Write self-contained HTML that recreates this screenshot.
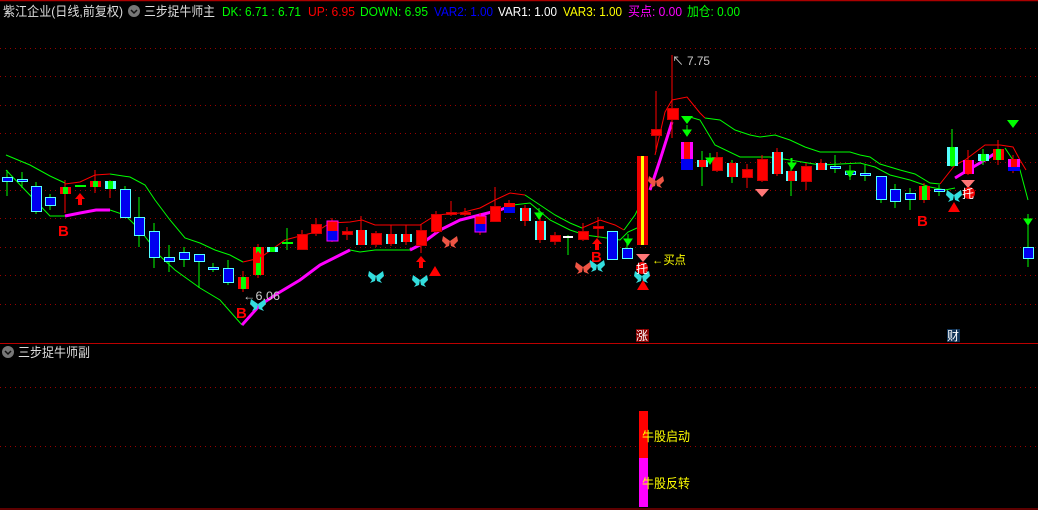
<!DOCTYPE html>
<html><head><meta charset="utf-8"><style>
html,body{margin:0;padding:0;background:#000;width:1038px;height:510px;overflow:hidden}
svg{display:block}
text{font-family:"Liberation Sans","Noto Sans CJK SC",sans-serif;font-size:13px}
</style></head><body>
<svg width="1038" height="510" viewBox="0 0 1038 510" xmlns="http://www.w3.org/2000/svg">
<rect width="1038" height="510" fill="#000"/>
<line x1="0" y1="0.5" x2="1038" y2="0.5" stroke="#a00" stroke-width="1.5"/>
<g stroke="#900" stroke-width="1" stroke-dasharray="1,4">
<line x1="0" y1="48.5" x2="1038" y2="48.5"/><line x1="0" y1="76.5" x2="1038" y2="76.5"/>
<line x1="0" y1="105.5" x2="1038" y2="105.5"/><line x1="0" y1="133.5" x2="1038" y2="133.5"/>
<line x1="0" y1="162.5" x2="1038" y2="162.5"/><line x1="0" y1="190.5" x2="1038" y2="190.5"/>
<line x1="0" y1="218.5" x2="1038" y2="218.5"/><line x1="0" y1="247.5" x2="1038" y2="247.5"/>
<line x1="0" y1="275.5" x2="1038" y2="275.5"/><line x1="0" y1="304.5" x2="1038" y2="304.5"/>
<line x1="0" y1="387.5" x2="1038" y2="387.5"/><line x1="0" y1="446.5" x2="1038" y2="446.5"/>
</g>
<line x1="0" y1="343.5" x2="1038" y2="343.5" stroke="#b00"/>
<line x1="0" y1="509" x2="1038" y2="509" stroke="#b00"/>

<!-- header -->
<text x="3" y="16" fill="#ddd" textLength="120" lengthAdjust="spacingAndGlyphs">紫江企业(日线,前复权)</text>
<circle cx="134" cy="11" r="6" fill="#777"/><path d="M131 10l3 3 3-3" stroke="#111" stroke-width="1.5" fill="none"/>
<text x="144" y="16" fill="#ddd" textLength="71" lengthAdjust="spacingAndGlyphs">三步捉牛师主</text>
<text x="222" y="16" fill="#0f0" textLength="79" lengthAdjust="spacingAndGlyphs">DK: 6.71 : 6.71</text>
<text x="308" y="16" fill="#f00" textLength="47" lengthAdjust="spacingAndGlyphs">UP: 6.95</text>
<text x="360" y="16" fill="#0f0" textLength="68" lengthAdjust="spacingAndGlyphs">DOWN: 6.95</text>
<text x="434" y="16" fill="#00f" textLength="59" lengthAdjust="spacingAndGlyphs">VAR2: 1.00</text>
<text x="498" y="16" fill="#fff" textLength="59" lengthAdjust="spacingAndGlyphs">VAR1: 1.00</text>
<text x="563" y="16" fill="#ff0" textLength="59" lengthAdjust="spacingAndGlyphs">VAR3: 1.00</text>
<text x="628" y="16" fill="#f0f" textLength="54" lengthAdjust="spacingAndGlyphs">买点: 0.00</text>
<text x="687" y="16" fill="#0f0" textLength="53" lengthAdjust="spacingAndGlyphs">加仓: 0.00</text>

<!-- band lines -->
<g fill="none" stroke-width="1">
<polyline stroke="#0f0" points="6,155 30,165 50,176 65,183"/>
<polyline stroke="#f00" points="65,184 80,182 95,175 110,174"/>
<polyline stroke="#0f0" points="110,174 130,177 145,185 155,200 170,220 185,238 200,243 215,250 230,255 243,262"/>
<polyline stroke="#f00" points="243,262 260,258 285,240 300,236 316,232 330,223 350,222 362,220 375,225 405,225 420,225 436,215 460,213 480,208 495,200 510,193 525,195"/>
<polyline stroke="#0f0" points="525,195 540,205 555,215 570,223 582,228"/>
<polyline stroke="#f00" points="582,228 600,220 615,225 624,230"/>
<polyline stroke="#0f0" points="624,230 635,215 640,205"/>
<polyline stroke="#f00" points="655,155 665,112 672,100 687,97 700,113 705,118"/>
<polyline stroke="#0f0" points="705,118 720,120 735,130 750,135 760,137 775,135 790,140 805,147 820,152 850,152 860,155 870,157 880,164 900,170 915,174 930,183 940,184"/>
<polyline stroke="#f00" points="940,184 955,165 965,160 985,145 1000,145 1013,147 1020,160 1026,170"/>
<polyline stroke="#0f0" points="6,170 25,190 50,216 65,216"/>
<polyline stroke="#f0f" stroke-width="3" points="65,216 80,213 96,210 110,210"/>
<polyline stroke="#0f0" points="110,210 125,215 140,230 160,256 175,270 200,288 220,300 242,325"/>
<polyline stroke="#f0f" stroke-width="3" points="242,325 260,305 280,292 300,280 320,265 340,255 350,250"/>
<polyline stroke="#0f0" points="350,250 360,252 375,250 410,250"/>
<polyline stroke="#f0f" stroke-width="3" points="410,250 420,245 440,230 460,220 480,215 500,210 513,205"/>
<polyline stroke="#0f0" points="513,205 530,203 550,220 570,230 585,235 600,237 620,240 628,232 637,228"/>
<polyline stroke="#f0f" stroke-width="3" points="650,190 660,160 672,122"/>
<polyline stroke="#0f0" points="690,117 700,120 715,145 740,157 770,157 790,160 820,165 860,163 875,167 890,175 910,180 930,187 945,190 955,188"/>
<polyline stroke="#f0f" stroke-width="3" points="955,178 968,170 985,160 1000,150"/>
<polyline stroke="#0f0" points="1005,148 1013,160 1020,170 1028,200"/>
</g>

<!-- candles -->
<g stroke-width="1">
<g stroke="#0f0">
<line x1="7" y1="170" x2="7" y2="196"/><line x1="22" y1="172" x2="22" y2="188"/><line x1="36" y1="182" x2="36" y2="214"/><line x1="50" y1="194" x2="50" y2="210"/>
<line x1="125" y1="186" x2="125" y2="217"/><line x1="139" y1="197" x2="139" y2="247"/><line x1="154" y1="223" x2="154" y2="268"/><line x1="169" y1="245" x2="169" y2="272"/><line x1="184" y1="247" x2="184" y2="267"/><line x1="199" y1="254" x2="199" y2="288"/><line x1="213" y1="263" x2="213" y2="272"/><line x1="228" y1="260" x2="228" y2="285"/><line x1="287" y1="228" x2="287" y2="250"/>
<line x1="612" y1="231" x2="612" y2="260"/><line x1="627" y1="240" x2="627" y2="258"/><line x1="702" y1="151" x2="702" y2="186"/><line x1="791" y1="158" x2="791" y2="196"/><line x1="835" y1="155" x2="835" y2="173"/><line x1="850" y1="165" x2="850" y2="180"/><line x1="865" y1="165" x2="865" y2="181"/><line x1="881" y1="176" x2="881" y2="203"/><line x1="895" y1="184" x2="895" y2="208"/><line x1="910" y1="188" x2="910" y2="210"/><line x1="939" y1="185" x2="939" y2="196"/><line x1="952" y1="129" x2="952" y2="167"/><line x1="983" y1="149" x2="983" y2="165"/><line x1="1028" y1="215" x2="1028" y2="267"/><line x1="568" y1="235" x2="568" y2="255"/><line x1="732" y1="160" x2="732" y2="183"/>
</g>
<g stroke="#f00">
<line x1="65" y1="180" x2="65" y2="213"/><line x1="95" y1="170" x2="95" y2="193"/><line x1="110" y1="180" x2="110" y2="198"/><line x1="243" y1="271" x2="243" y2="292"/><line x1="258" y1="244" x2="258" y2="278"/><line x1="302" y1="230" x2="302" y2="250"/><line x1="316" y1="218" x2="316" y2="236"/><line x1="332" y1="218" x2="332" y2="242"/><line x1="347" y1="227" x2="347" y2="240"/><line x1="361" y1="216" x2="361" y2="245"/><line x1="376" y1="231" x2="376" y2="247"/><line x1="391" y1="225" x2="391" y2="246"/><line x1="406" y1="225" x2="406" y2="245"/><line x1="421" y1="224" x2="421" y2="253"/><line x1="436" y1="211" x2="436" y2="233"/><line x1="451" y1="201" x2="451" y2="216"/><line x1="465" y1="208" x2="465" y2="216"/><line x1="480" y1="213" x2="480" y2="235"/><line x1="495" y1="187" x2="495" y2="222"/><line x1="509" y1="200" x2="509" y2="213"/><line x1="525" y1="205" x2="525" y2="226"/><line x1="540" y1="216" x2="540" y2="243"/><line x1="555" y1="232" x2="555" y2="245"/><line x1="583" y1="223" x2="583" y2="241"/><line x1="598" y1="217" x2="598" y2="238"/><line x1="656" y1="91" x2="656" y2="152"/><line x1="672" y1="55" x2="672" y2="138"/><line x1="717" y1="152" x2="717" y2="172"/><line x1="747" y1="164" x2="747" y2="188"/><line x1="762" y1="155" x2="762" y2="182"/><line x1="777" y1="148" x2="777" y2="176"/><line x1="806" y1="163" x2="806" y2="190"/><line x1="821" y1="159" x2="821" y2="170"/><line x1="924" y1="183" x2="924" y2="203"/><line x1="968" y1="150" x2="968" y2="175"/><line x1="998" y1="140" x2="998" y2="165"/><line x1="1013" y1="155" x2="1013" y2="173"/>
</g>
<g fill="#0000f0" stroke="#5ff">
<rect x="2.5" y="177.5" width="10" height="4"/><rect x="17.5" y="179.5" width="10" height="2"/><rect x="31.5" y="186.5" width="10" height="25"/><rect x="45.5" y="197.5" width="10" height="8"/>
<rect x="120.5" y="189.5" width="10" height="28"/><rect x="134.5" y="217.5" width="10" height="18"/><rect x="149.5" y="231.5" width="10" height="26"/><rect x="164.5" y="257.5" width="10" height="4"/><rect x="179.5" y="252.5" width="10" height="7"/><rect x="194.5" y="254.5" width="10" height="7"/><rect x="208.5" y="267.5" width="10" height="2"/><rect x="223.5" y="268.5" width="10" height="14"/>
<rect x="607.5" y="231.5" width="10" height="28"/><rect x="622.5" y="248.5" width="10" height="10"/>
<rect x="830.5" y="166.5" width="10" height="2"/><rect x="845.5" y="171.5" width="10" height="3"/><rect x="860.5" y="173.5" width="10" height="2"/><rect x="876.5" y="176.5" width="10" height="23"/><rect x="890.5" y="189.5" width="10" height="12"/><rect x="905.5" y="193.5" width="10" height="6"/><rect x="934.5" y="189.5" width="10" height="2"/><rect x="1023.5" y="247.5" width="10" height="11"/>
</g>
<g fill="#f00" stroke="#c00">
<rect x="297.5" y="234.5" width="10" height="15"/><rect x="311.5" y="224.5" width="10" height="9"/><rect x="342.5" y="231.5" width="10" height="3"/><rect x="371.5" y="233.5" width="10" height="11"/><rect x="416.5" y="230.5" width="10" height="15"/><rect x="431.5" y="214.5" width="10" height="17"/><rect x="446.5" y="212.5" width="10" height="2"/><rect x="460.5" y="212.5" width="10" height="2"/><rect x="490.5" y="206.5" width="10" height="15"/><rect x="550.5" y="235.5" width="10" height="6"/><rect x="578.5" y="231.5" width="10" height="8"/><rect x="593.5" y="226.5" width="10" height="2"/>
<rect x="651.5" y="129.5" width="10" height="6"/><rect x="667.5" y="108.5" width="11" height="11"/><rect x="712.5" y="157.5" width="10" height="13"/><rect x="742.5" y="169.5" width="10" height="8"/><rect x="757.5" y="159.5" width="10" height="21"/><rect x="801.5" y="166.5" width="10" height="15"/>
</g>
<rect x="563" y="236" width="10" height="2" fill="#fff"/>
<g>
<rect x="356" y="230" width="11" height="15" fill="#5ff"/><rect x="358" y="230" width="7" height="15" fill="#f00"/>
<rect x="386" y="234" width="11" height="10" fill="#5ff"/><rect x="388" y="234" width="7" height="10" fill="#f00"/>
<rect x="401" y="234" width="11" height="8" fill="#5ff"/><rect x="403" y="234" width="7" height="8" fill="#f00"/>
<rect x="520" y="208" width="11" height="13" fill="#5ff"/><rect x="522" y="208" width="7" height="13" fill="#f00"/>
<rect x="535" y="221" width="11" height="19" fill="#5ff"/><rect x="537" y="221" width="7" height="19" fill="#f00"/>
<rect x="697" y="160" width="11" height="7" fill="#5ff"/><rect x="699" y="160" width="7" height="7" fill="#f00"/>
<rect x="727" y="163" width="11" height="14" fill="#5ff"/><rect x="729" y="163" width="7" height="14" fill="#f00"/>
<rect x="772" y="152" width="11" height="22" fill="#5ff"/><rect x="774" y="152" width="7" height="22" fill="#f00"/>
<rect x="786" y="171" width="11" height="10" fill="#5ff"/><rect x="788" y="171" width="7" height="10" fill="#f00"/>
<rect x="816" y="163" width="11" height="7" fill="#5ff"/><rect x="818" y="163" width="7" height="7" fill="#f00"/>
<rect x="60" y="187" width="11" height="7" fill="#f00"/><rect x="63" y="187" width="5" height="7" fill="#0f0"/>
<rect x="90" y="181" width="11" height="6" fill="#f00"/><rect x="93" y="181" width="5" height="6" fill="#0f0"/>
<rect x="238" y="277" width="11" height="12" fill="#f00"/><rect x="241" y="277" width="5" height="12" fill="#0f0"/>
<rect x="253" y="247" width="11" height="28" fill="#f00"/><rect x="256" y="247" width="5" height="28" fill="#0f0"/>
<rect x="919" y="186" width="11" height="14" fill="#f00"/><rect x="922" y="186" width="5" height="14" fill="#0f0"/>
<rect x="993" y="149" width="11" height="11" fill="#f00"/><rect x="996" y="149" width="5" height="11" fill="#0f0"/>
<rect x="105" y="181" width="11" height="8" fill="#5ff"/><rect x="108" y="181" width="5" height="8" fill="#0f0"/>
<rect x="267" y="247" width="11" height="5" fill="#5ff"/><rect x="270" y="247" width="5" height="5" fill="#0f0"/>
<rect x="947" y="147" width="11" height="19" fill="#5ff"/><rect x="950" y="147" width="5" height="19" fill="#0f0"/>
<rect x="978" y="154" width="11" height="7" fill="#5ff"/><rect x="981" y="154" width="5" height="7" fill="#0f0"/>
<rect x="75" y="185" width="11" height="2" fill="#0f0"/><rect x="282" y="242" width="11" height="2" fill="#0f0"/>
<rect x="327" y="221" width="11" height="20" fill="#0000f0"/><rect x="327" y="221" width="11" height="10" fill="#f00"/><rect x="327" y="221" width="11" height="20" fill="none" stroke="#f0f"/>
<rect x="475" y="216" width="11" height="16" fill="#0000f0"/><rect x="475" y="216" width="11" height="8" fill="#f00"/><rect x="475" y="216" width="11" height="16" fill="none" stroke="#f0f"/>
<rect x="504" y="203" width="11" height="10" fill="#0000f0"/><rect x="504" y="203" width="11" height="4" fill="#f00"/>
<rect x="681" y="142" width="12" height="28" fill="#0000f0"/><rect x="681" y="142" width="12" height="17" fill="#f0f"/><rect x="684" y="142" width="6" height="17" fill="#f00"/>
<rect x="963" y="160" width="11" height="14" fill="#f0f"/><rect x="965" y="160" width="7" height="14" fill="#f00"/>
<rect x="1008" y="159" width="12" height="12" fill="#0000f0"/><rect x="1008" y="159" width="12" height="8" fill="#f0f"/><rect x="1011" y="159" width="6" height="8" fill="#f00"/>
</g>
<rect x="637" y="156" width="11" height="89" fill="#e00"/><rect x="641" y="156" width="3" height="89" fill="#ff0"/>
</g>

<!-- markers -->
<text x="58" y="236" fill="#f00" style="font-size:15px;font-weight:bold">B</text>
<text x="236" y="318" fill="#f00" style="font-size:15px;font-weight:bold">B</text>
<text x="591" y="262" fill="#f00" style="font-size:15px;font-weight:bold">B</text>
<text x="917" y="226" fill="#f00" style="font-size:15px;font-weight:bold">B</text>
<g fill="#f00">
<path d="M80 193l-5 6h3v6h4v-6h3z"/><path d="M258 251l-5 6h3v6h4v-6h3z"/><path d="M421 256l-5 6h3v6h4v-6h3z"/><path d="M597 238l-5 6h3v6h4v-6h3z"/>
<path d="M435 266l-6 10h12z"/><path d="M643 280l-6 10h12z"/><path d="M954 202l-6 10h12z"/>
</g>
<g fill="#0f0">
<path d="M681 116h12l-6 8z"/><path d="M1007 120h12l-6 8z"/>
<path d="M539 208v5h-4l4 6 4-6h-4z" stroke="#0f0"/><path d="M628 234v5h-4l4 6 4-6h-4z" stroke="#0f0"/>
<path d="M687 125v5h-4l4 6 4-6h-4z" stroke="#0f0"/><path d="M792 158v5h-4l4 6 4-6h-4z" stroke="#0f0"/><path d="M850 166v5h-4l4 6 4-6h-4z" stroke="#0f0"/><path d="M1028 214v5h-4l4 6 4-6h-4z" stroke="#0f0"/><path d="M710 153v5h-4l4 6 4-6h-4z" stroke="#0f0"/>
</g>
<g fill="#3dd">
<path d="M258 304l-7-5-1 5 4 4-2 3 5-2zM258 304l7-5 1 5-4 4 2 3-5-2z"/>
<path d="M376 276l-7-5-1 5 4 4-2 3 5-2zM376 276l7-5 1 5-4 4 2 3-5-2z"/>
<path d="M420 280l-7-5-1 5 4 4-2 3 5-2zM420 280l7-5 1 5-4 4 2 3-5-2z"/>
<path d="M597 265l-7-5-1 5 4 4-2 3 5-2zM597 265l7-5 1 5-4 4 2 3-5-2z"/>
<path d="M642 276l-7-5-1 5 4 4-2 3 5-2zM642 276l7-5 1 5-4 4 2 3-5-2z"/>
<path d="M954 195l-7-5-1 5 4 4-2 3 5-2zM954 195l7-5 1 5-4 4 2 3-5-2z"/>
</g>
<g fill="#e54">
<path d="M450 241l-7-5-1 5 4 4-2 3 5-2zM450 241l7-5 1 5-4 4 2 3-5-2z"/>
<path d="M583 267l-7-5-1 5 4 4-2 3 5-2zM583 267l7-5 1 5-4 4 2 3-5-2z"/>
<path d="M656 181l-7-5-1 5 4 4-2 3 5-2zM656 181l7-5 1 5-4 4 2 3-5-2z"/>
</g>
<g fill="#f77"><path d="M755 189h14l-7 8z"/><path d="M636 254h14l-7 8z"/><path d="M961 180h14l-7 8z"/></g>
<circle cx="642" cy="268" r="6" fill="#e00"/><text x="636" y="273" fill="#fff" style="font-size:12px">托</text>
<circle cx="969" cy="193" r="6" fill="#e00"/><text x="962" y="198" fill="#fff" style="font-size:12px">托</text>
<text x="652" y="264" fill="#ff0" style="font-size:12px" textLength="34" lengthAdjust="spacingAndGlyphs">←买点</text>
<text x="243" y="300" fill="#ccc" style="font-size:12px" textLength="37" lengthAdjust="spacingAndGlyphs">←6.06</text>
<text x="672" y="65" fill="#ccc" style="font-size:12px" textLength="38" lengthAdjust="spacingAndGlyphs">↖ 7.75</text>

<rect x="636" y="329" width="13" height="13" fill="#800"/><text x="636" y="340" fill="#fff" style="font-size:12px">涨</text>
<rect x="947" y="329" width="13" height="13" fill="#135"/><text x="947" y="340" fill="#fff" style="font-size:12px">财</text>

<circle cx="8" cy="352" r="6" fill="#777"/><path d="M5 351l3 3 3-3" stroke="#111" stroke-width="1.5" fill="none"/>
<text x="18" y="357" fill="#ddd" textLength="72" lengthAdjust="spacingAndGlyphs">三步捉牛师副</text>
<rect x="639" y="411" width="9" height="47" fill="#f00"/>
<rect x="639" y="458" width="9" height="49" fill="#f0f"/>
<text x="642" y="441" fill="#ff0" textLength="48" lengthAdjust="spacingAndGlyphs">牛股启动</text>
<text x="642" y="488" fill="#ff0" textLength="48" lengthAdjust="spacingAndGlyphs">牛股反转</text>
</svg>
</body></html>
